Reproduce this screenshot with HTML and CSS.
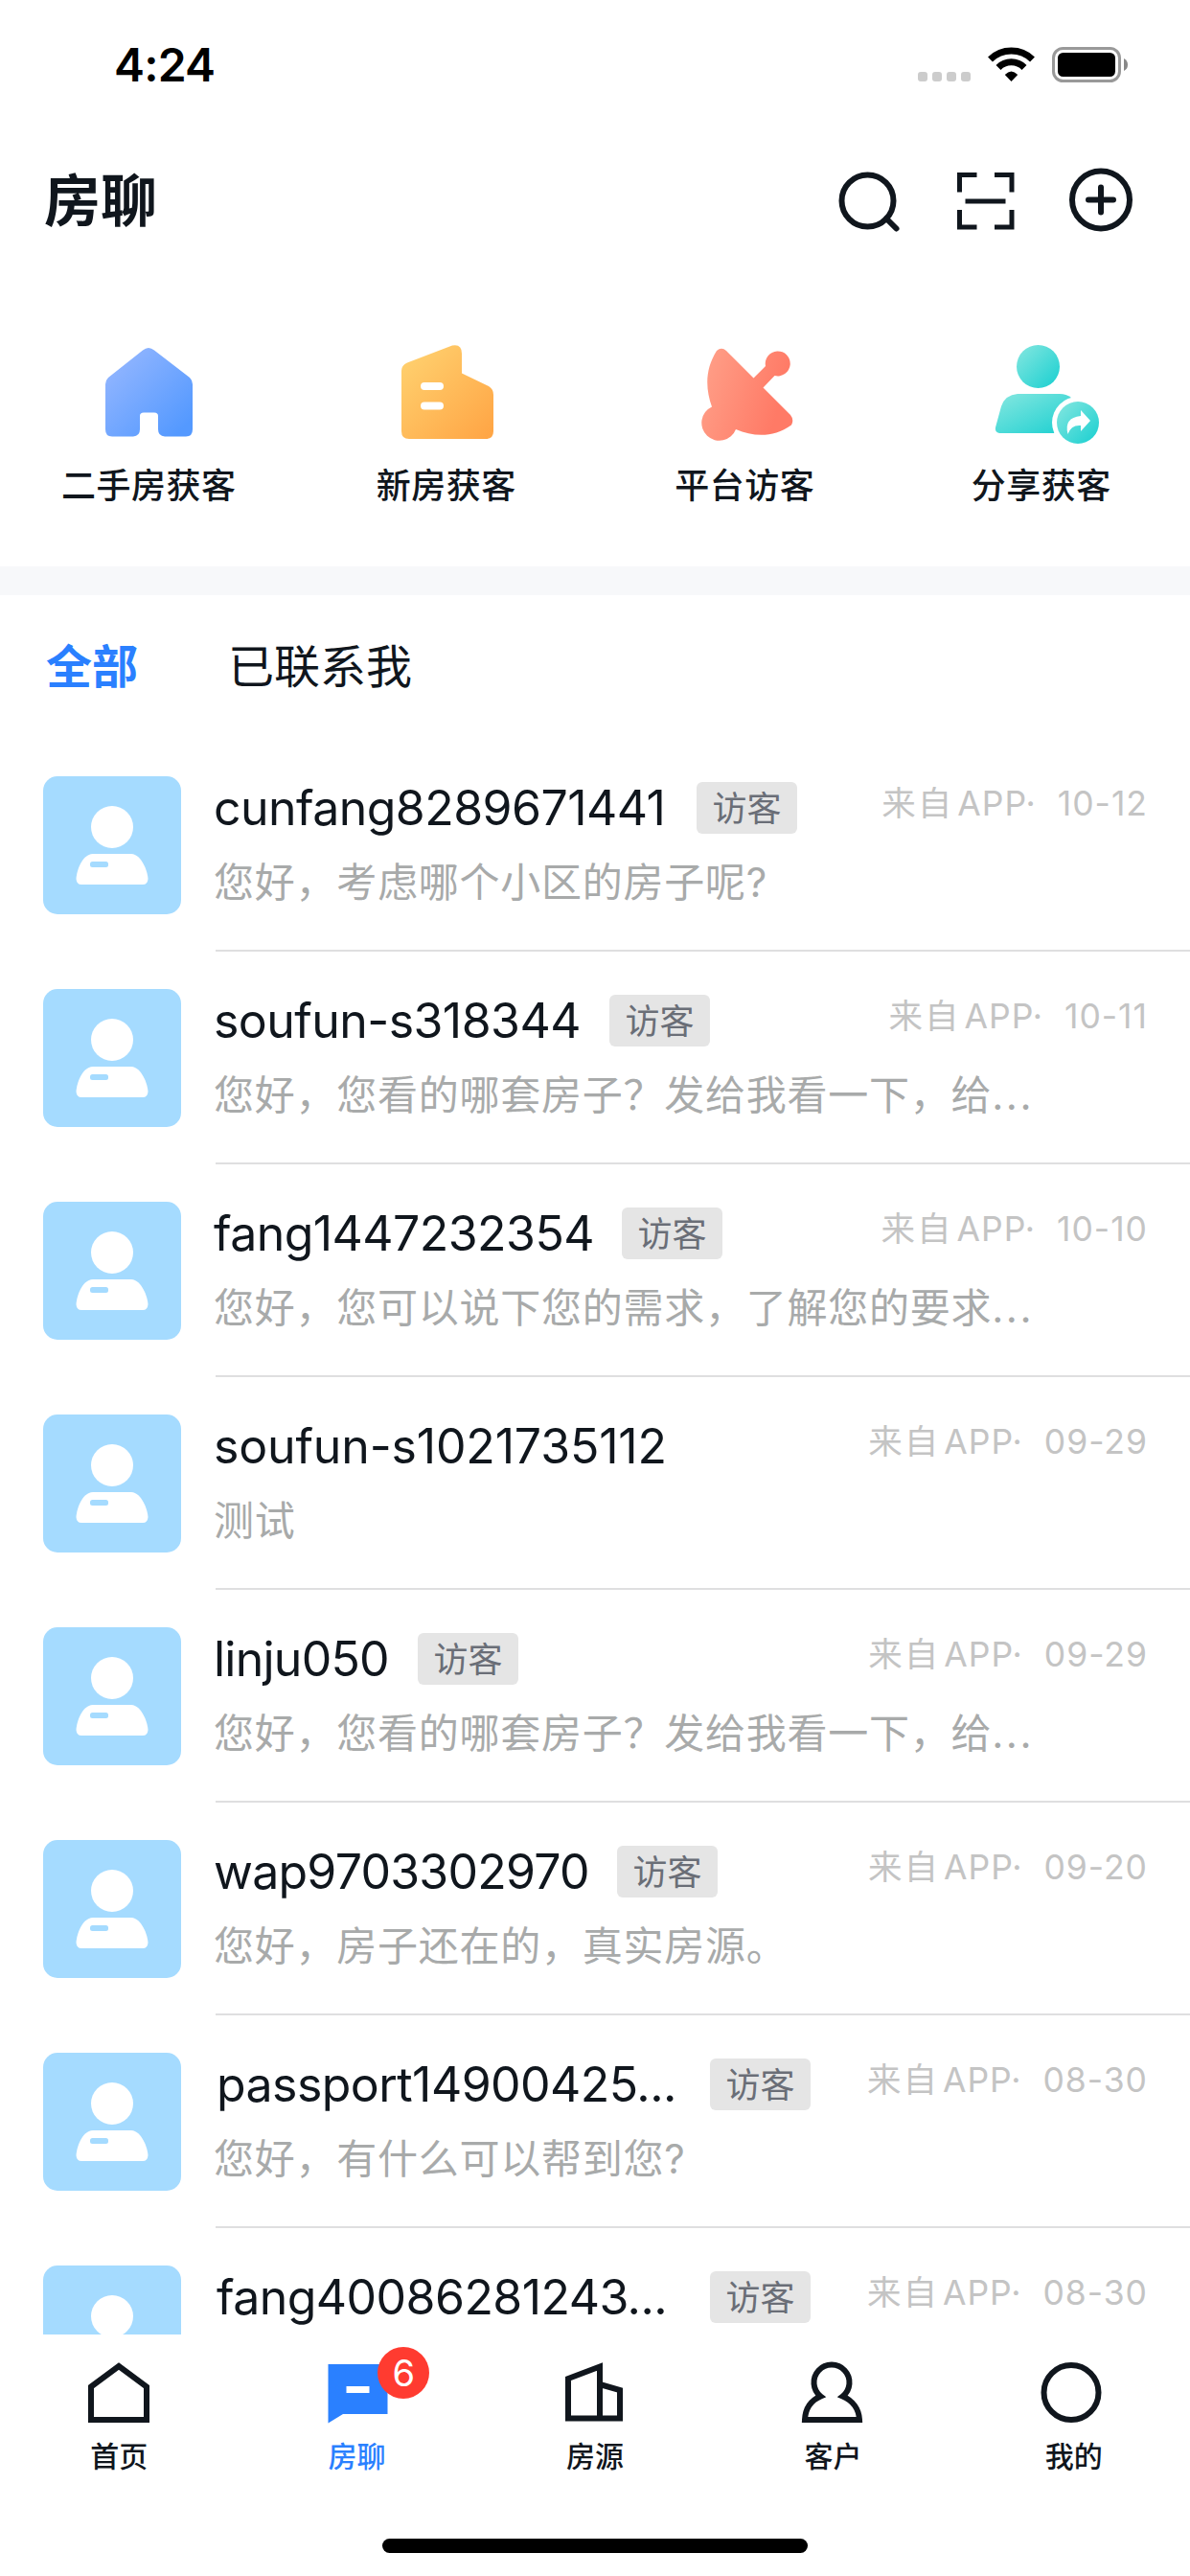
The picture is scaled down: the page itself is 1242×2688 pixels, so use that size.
FILE: index.html
```html
<!DOCTYPE html>
<html lang="zh-CN">
<head>
    <meta charset="UTF-8">
    <meta name="viewport" content="width=device-width, initial-scale=1.0">
    <title>房聊</title>
    <link rel="stylesheet" href="styles.css">
</head>
<body>
    <div class="status-bar">
        <span class="time">4:24</span>
        <svg class="status-icons" width="222" height="40" viewBox="0 0 222 40">
            <g fill="#ccc">
                <rect x="0" y="27" width="10" height="10" rx="3"/>
                <rect x="15" y="27" width="10" height="10" rx="3"/>
                <rect x="30" y="27" width="10" height="10" rx="3"/>
                <rect x="45" y="27" width="10" height="10" rx="3"/>
            </g>
            <g fill="none" stroke="#000" stroke-width="7">
                <path d="M75.5 14A31.5 31.5 0 0 1 119.500 14"/>
                <path d="M84 22.500A19 19 0 0 1 111 22.500"/>
            </g>
            <path d="M97.500 37L90.800 30Q97.500 23 104.200 30Z"/>
            <rect x="141.500" y="2.500" width="69" height="34" rx="10" fill="none" stroke="#999" stroke-width="3"/>
            <rect x="146" y="7" width="60" height="25" rx="5.500"/>
            <path d="M215 13Q219 15 219 19.500T215 26Z" fill="#888"/>
        </svg>
    </div>

    <div class="header">
        <h1>房聊</h1>
        <div class="header-icons">
            <svg width="66" height="66" viewBox="0 0 66 66">
                <circle cx="31.500" cy="32.500" r="27"/>
                <path d="M51 51L61.500 61.500" stroke-linecap="round"/>
            </svg>
            <svg width="60" height="60" viewBox="0 0 60 60">
                <path stroke-width="5" d="M3.500 20.500V2.500H21.500M40 2.500H58V20.500M58 39V57H40M21.500 57H3.500V39M9.500 30H51.500"/>
            </svg>
            <svg width="66" height="66" viewBox="0 0 66 66">
                <circle cx="33" cy="31.500" r="30"/>
                <path d="M33 18.500V44.500M20 31.500H46" stroke-linecap="round"/>
            </svg>
        </div>
    </div>

    <div class="actions">
        <div class="action">
            <svg width="120" height="120" viewBox="95 350 120 120">
                <linearGradient id="blue" x1="0" y1="0" x2="1" y2="1"><stop offset="0.100" stop-color="#93b6ff"/><stop offset="0.900" stop-color="#5499ff"/></linearGradient>
                <path fill="url(#blue)" d="M149 365.500Q155 360.500 161 365.500L198 394Q201 397 201 401V448Q201 455.500 194 455.500H172Q165 455 165 448V434Q165 430.500 161 430.500H150Q146 430.500 146 434V448Q146 455 139 455.500H117Q110 455.500 110 448V401Q110 397 113 394Z"/>
            </svg>
            <span>二手房获客</span>
        </div>
        <div class="action">
            <svg width="120" height="120" viewBox="405 350 120 120">
                <linearGradient id="orange" x1="0" y1="0" x2="1" y2="1"><stop offset="0.100" stop-color="#ffcf6d"/><stop offset="0.950" stop-color="#ffa646"/></linearGradient>
                <path fill="url(#orange)" d="M424 378.500L471 360.500Q481 358.500 481 369V389.500L509 403Q514 406 514 412V450Q514 458 506 458H426Q418 458 418 450V387Q418 381 424 378.500Z"/>
                <path d="M442 403H458M442 423.500H458" stroke="#fff" stroke-width="8" stroke-linecap="round"/>
            </svg>
            <span>新房获客</span>
        </div>
        <div class="action">
            <svg width="120" height="120" viewBox="716 350 120 120">
                <linearGradient id="red" x1="0" y1="0" x2="1" y2="0.300"><stop offset="0.100" stop-color="#ff9d86"/><stop offset="0.950" stop-color="#ff7a66"/></linearGradient>
                <path fill="url(#red)" d="M747 366Q752 361.500 757 366L785.500 394.500L798 382A13 13 0 1 1 807.500 392L795.500 404.500L824 433Q828 438 825 443.500C806 457 786 456 767 448A18.500 18.500 0 1 1 742 424.500C735 405 735 385 747 366Z"/>
            </svg>
            <span>平台访客</span>
        </div>
        <div class="action">
            <svg width="120" height="120" viewBox="1028 350 120 120">
                <linearGradient id="teal" x1="0" y1="0" x2="1" y2="1"><stop offset="0" stop-color="#86e7e0"/><stop offset="1" stop-color="#18cfd0"/></linearGradient>
                <circle cx="1084.500" cy="382.500" r="22.500" fill="url(#teal)"/>
                <path fill="url(#teal)" d="M1063 411H1107Q1114 411 1119 415L1124 452H1044Q1039 451 1040 446L1046 424Q1050 412 1063 411Z"/>
                <circle cx="1126" cy="441" r="27" fill="#fff"/>
                <circle cx="1126" cy="441" r="22" fill="url(#teal)"/>
                <path fill="#fff" d="M1129 428L1139 439L1129 450V444Q1119 443 1115.500 453Q1111 436 1129 434Z"/>
            </svg>
            <span>分享获客</span>
        </div>
    </div>

    <div class="tabs">
        <span class="tab active">全部</span>
        <span class="tab">已联系我</span>
    </div>

    <div class="chat-list" id="chatList"></div>

    <div class="nav">
        <div class="nav-item">
            <svg width="66" height="66" viewBox="0 0 66 66"><path d="M4 27.500L33 6L62 27.500V62H4Z"/></svg>
            <span>首页</span>
        </div>
        <div class="nav-item active">
            <svg width="66" height="66" viewBox="0 0 66 66"><path class="solid" d="M2.500 4H64.500V56H18L2.500 65.500Z"/><path class="dash" d="M21.500 30.500H45.500"/></svg>
            <span>房聊</span>
            <b class="badge">6</b>
        </div>
        <div class="nav-item">
            <svg width="66" height="66" viewBox="0 0 66 66"><path d="M38 60.500H5V19L38 6.500V60.500H59V31L38 25"/></svg>
            <span>房源</span>
        </div>
        <div class="nav-item">
            <svg width="66" height="66" viewBox="0 0 66 66"><path d="M20.500 37.500A18.500 18.500 0 1 1 43.500 37.500C54 42 60.500 51 61 62H4C4.500 51 10 42 20.500 37.500Z"/></svg>
            <span>客户</span>
        </div>
        <div class="nav-item">
            <svg width="66" height="66" viewBox="0 0 66 66"><circle cx="33" cy="33.500" r="28.500"/></svg>
            <span>我的</span>
        </div>
        <div class="home-indicator"></div>
    </div>

    <script src="script.js"></script>
</body>
</html>
```
FILE: styles.css
```css
* {
    box-sizing: border-box;
}
body {
    margin: 0;
    width: 1242px;
    height: 2688px;
    overflow: hidden;
    display: flex;
    flex-direction: column;
    background: #fff;
    color: #10161d;
    font-family: Inter, "Noto Sans CJK SC", sans-serif;
}
svg {
    display: block;
    flex: none;
    overflow: visible;
}
.status-bar {
    height: 132px;
    padding: 0 62px 0 119px;
    display: flex;
    justify-content: space-between;
    color: #000;
}
.time {
    padding-top: 38px;
    font-size: 48px;
    line-height: 60px;
    font-weight: 600;
    letter-spacing: -0.8px;
}
.status-icons {
    margin-top: 48px;
}
.header {
    height: 156px;
    padding: 0 60px 0 46px;
    display: flex;
    justify-content: space-between;
    align-items: center;
}
h1 {
    margin: 0;
    font-size: 59px;
    line-height: 80px;
    font-weight: 700;
}
.header-icons {
    display: flex;
    align-items: center;
    gap: 58px;
}
.header-icons svg {
    fill: none;
    stroke: #10161d;
    stroke-width: 6;
}
.actions {
    height: 333px;
    padding-top: 62px;
    display: grid;
    grid-template-columns: repeat(4, 1fr);
    border-bottom: 30px solid #f7f8fa;
}
.action {
    display: flex;
    flex-direction: column;
    align-items: center;
    gap: 11px;
    font-size: 36px;
    line-height: 52px;
    font-weight: 500;
    letter-spacing: 0.5px;
}
.action:nth-child(3) {
    padding-left: 2px;
}
.tabs {
    height: 150px;
    padding: 40px 48px;
    display: flex;
    gap: 94px;
    font-size: 48px;
    line-height: 70px;
}
.tab.active {
    color: #2a80ff;
    font-weight: 700;
}
.chat-list {
    flex: 1;
    min-height: 0;
    overflow: hidden;
}
.chat {
    height: 222px;
    padding-left: 45px;
    display: flex;
    gap: 36px;
}
.avatar {
    margin-top: 39px;
    background: #a5dbff;
    border-radius: 15px;
}
.chat-body {
    flex: 1;
    padding: 39px 45px 0 0;
    border-bottom: 2px solid #dfdfe0;
}
.chat-top {
    height: 66px;
    display: flex;
    align-items: center;
}
.name {
    margin-left: -2px;
    font-size: 50px;
    line-height: 66px;
    letter-spacing: -0.55px;
    white-space: nowrap;
}
.name.tight {
    letter-spacing: -0.75px;
}
.name.loose {
    letter-spacing: -0.15px;
}
.name.cut {
    padding-left: 3px;
}
.tag {
    width: 105px;
    height: 54px;
    margin-left: 30px;
    border-radius: 6px;
    background: #e5e5e5;
    color: #6a6e77;
    font-size: 36px;
    line-height: 56px;
    text-align: center;
}
.from {
    margin-left: auto;
    margin-right: -1px;
    margin-top: -16px;
    color: #c4c4c4;
    font-size: 35.5px;
    letter-spacing: 1px;
    white-space: pre;
}
.from span {
    margin-right: 4px;
    letter-spacing: 2px;
}
.message {
    margin-left: -2px;
    padding-top: 13px;
    color: #a8aaaa;
    font-size: 42px;
    line-height: 64px;
    letter-spacing: 0.75px;
    white-space: nowrap;
}
.dots {
    letter-spacing: 2.5px;
}
.nav {
    position: relative;
    height: 252px;
    padding-top: 27px;
    display: grid;
    grid-template-columns: repeat(5, 1fr);
    background: #fff;
}
.nav-item {
    position: relative;
    display: flex;
    flex-direction: column;
    align-items: center;
    gap: 13px;
    font-size: 30px;
    line-height: 42px;
    font-weight: 500;
}
.nav-item svg {
    fill: none;
    stroke: #10161d;
    stroke-width: 6;
}
.nav-item.active {
    color: #2a80ff;
}
.nav-item:nth-child(5) span {
    padding-left: 6px;
}
.nav-item .solid {
    fill: #2a80ff;
    stroke: none;
}
.nav-item .dash {
    stroke: #fff;
    stroke-width: 7;
}
.badge {
    position: absolute;
    left: 146px;
    top: -14px;
    width: 54px;
    height: 54px;
    border-radius: 50%;
    background: #ff3b30;
    color: #fff;
    font-size: 38px;
    line-height: 54px;
    font-weight: 400;
    text-align: center;
}
.home-indicator {
    position: absolute;
    left: 399px;
    bottom: 24px;
    width: 444px;
    height: 15px;
    border-radius: 8px;
    background: #000;
}
```
FILE: script.js
```js
const chats = [
    { name: 'cunfang8289671441', width: 474, tag: true, date: '10-12', message: '您好，考虑哪个小区的房子呢?' },
    { name: 'soufun-s318344', width: 383, tag: true, date: '10-11', message: '您好，您看的哪套房子？发给我看一下，给...' },
    { name: 'fang1447232354', width: 396, tag: true, date: '10-10', message: '您好，您可以说下您的需求，了解您的要求...' },
    { name: 'soufun-s1021735112', width: 474, style: 'loose', tag: false, date: '09-29', message: '测试' },
    { name: 'linju050', width: 183, style: 'tight', tag: true, date: '09-29', message: '您好，您看的哪套房子？发给我看一下，给...' },
    { name: 'wap9703302970', width: 391, style: 'tight', tag: true, date: '09-20', message: '您好，房子还在的，真实房源。' },
    { name: 'passport14900425...', width: 488, style: 'cut', tag: true, date: '08-30', message: '您好，有什么可以帮到您?' },
    { name: 'fang40086281243...', width: 488, style: 'cut', tag: true, date: '08-30', message: '' }
];

document.getElementById('chatList').innerHTML = chats.map(chat => `
    <div class="chat">
        <svg class="avatar" width="144" height="144" viewBox="0 0 144 144">
            <circle cx="72" cy="53" r="22" fill="#fff"/>
            <path fill="#fff" d="M52 81H92C103 82 109 99 109.500 107Q109 113 104 113H40Q35 113 34.500 107C35 99 40 82 52 81Z"/>
            <rect x="49" y="89" width="19" height="6" rx="2.500" fill="#a5dbff"/>
        </svg>
        <div class="chat-body">
            <div class="chat-top">
                <span class="name ${chat.style || ''}" style="width: ${chat.width}px">${chat.name}</span>
                ${chat.tag ? '<span class="tag">访客</span>' : ''}
                <div class="from"><span>来自</span>APP·  ${chat.date}</div>
            </div>
            <div class="message">${chat.message.replace('...', '<span class="dots">...</span>')}</div>
        </div>
    </div>`).join('');
```
